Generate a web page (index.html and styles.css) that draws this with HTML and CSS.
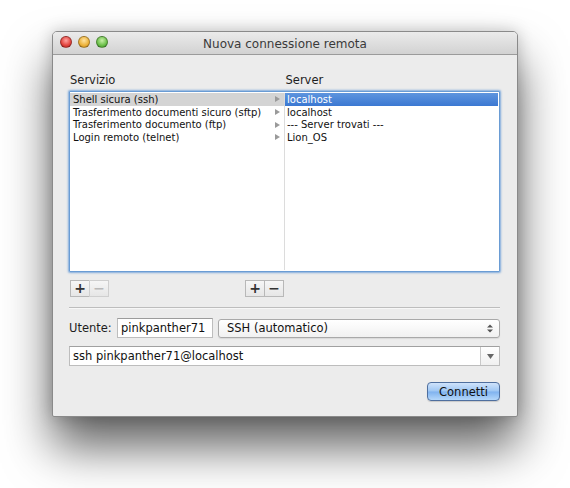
FILE: index.html
```html
<!DOCTYPE html>
<html>
<head>
	<title>Nuova connessione remota</title>
	<link rel="stylesheet" href="styles.css">
</head>
<body>

	<div class="window">
		<div class="titlebar">
			<div class="lights">
				<span class="light red"></span>
				<span class="light yellow"></span>
				<span class="light green"></span>
			</div>
			<div class="title">Nuova connessione remota</div>
		</div>

		<div class="content">
			<div class="heads">
				<div class="head">Servizio</div>
				<div class="head">Server</div>
			</div>

			<div class="browser">
				<div class="col left">
					<div class="row sel-gray"><span>Shell sicura (ssh)</span><i class="arr"></i></div>
					<div class="row"><span>Trasferimento documenti sicuro (sftp)</span><i class="arr"></i></div>
					<div class="row"><span>Trasferimento documento (ftp)</span><i class="arr"></i></div>
					<div class="row"><span>Login remoto (telnet)</span><i class="arr"></i></div>
				</div>
				<div class="col right">
					<div class="row sel-blue"><span>localhost</span></div>
					<div class="row"><span>localhost</span></div>
					<div class="row"><span>--- Server trovati ---</span></div>
					<div class="row"><span>Lion_OS</span></div>
				</div>
			</div>

			<div class="tools">
				<div class="seg">
					<button class="btn">+</button>
					<button class="btn off">&minus;</button>
				</div>
				<div class="seg">
					<button class="btn">+</button>
					<button class="btn">&minus;</button>
				</div>
			</div>

			<div class="sep"></div>

			<div class="user">
				<label>Utente:</label>
				<div class="field">pinkpanther71</div>
				<div class="popup">
					<span>SSH (automatico)</span>
					<span class="updown">
						<svg width="6" height="9" viewBox="0 0 6 9"><path d="M0 3.5 L3 0.5 L6 3.5 Z M0 5.5 L3 8.5 L6 5.5 Z" fill="#555"/></svg>
					</span>
				</div>
			</div>

			<div class="combo">
				<div class="combo-text">ssh pinkpanther71@localhost</div>
				<div class="combo-btn">
					<svg width="7" height="5" viewBox="0 0 7 5"><path d="M0 0 L7 0 L3.5 5 Z" fill="#666"/></svg>
				</div>
			</div>

			<div class="actions">
				<button class="connect">Connetti</button>
			</div>
		</div>
	</div>

</body>
</html>
```

FILE: styles.css
```css
*{
	box-sizing: border-box;
	font-family: 'DejaVu Sans', 'Liberation Sans', sans-serif;
}
html{
	background: #ffffff;
}
body{
	margin: 0px;
	background: #ffffff;
	padding: 31px 52px 71px 52px;
	min-height: 488px;
}

.window{
	width: 466px;
	height: 386px;
	background: #ececec;
	border: 1px solid #8a8a8a;
	border-radius: 5px 5px 2px 2px;
	box-shadow: 0px 30px 48px rgba(0,0,0,0.62), 0px 0px 16px rgba(0,0,0,0.2);
	display: flex;
	flex-direction: column;
	overflow: hidden;
}

.titlebar{
	height: 23px;
	display: flex;
	align-items: center;
	position: relative;
	background: linear-gradient(#ebebeb, #d2d2d2);
	border-bottom: 1px solid #9b9b9b;
	flex-shrink: 0;
}

.lights{
	display: flex;
	gap: 6px;
	padding-left: 7px;
	position: absolute;
	left: 0px;
	top: 4px;
}

.light{
	width: 12px;
	height: 12px;
	border-radius: 50%;
	display: block;
	border: 1px solid rgba(0,0,0,0.3);
}
.red{ background: radial-gradient(circle at 50% 35%, #ffa2a0, #e2443e 60%, #b0231f); }
.yellow{ background: radial-gradient(circle at 50% 35%, #ffe3a0, #ecb23a 60%, #c0821b); }
.green{ background: radial-gradient(circle at 50% 35%, #c8f0a8, #6cc04a 60%, #3c8f28); }

.title{
	width: 100%;
	text-align: center;
	font-size: 12px;
	color: #3a3a3a;
	padding-top: 1px;
}

.content{
	padding: 14px 17px 0px 16px;
	display: flex;
	flex-direction: column;
}

.heads{
	display: flex;
	height: 22px;
	align-items: center;
}
.head{
	width: 216px;
	font-size: 11.5px;
	color: #1e1e1e;
	padding-left: 1px;
}

.browser{
	display: flex;
	height: 181px;
	background: #ffffff;
	border: 1px solid #6a9cd4;
	box-shadow: 0px 0px 2px 1px rgba(94,150,214,0.75);
	border-radius: 1px;
	padding: 1px 0px;
}

.col{
	display: flex;
	flex-direction: column;
}
.col.left{
	width: 215px;
	border-right: 1px solid #dcdcdc;
}
.col.right{
	flex: 1;
	padding-right: 1px;
}

.row{
	height: 12.7px;
	display: flex;
	align-items: center;
	justify-content: space-between;
	font-size: 10px;
	color: #111;
	padding: 0px 4px 0px 3px;
	white-space: nowrap;
}
.col.right .row{
	padding-left: 2px;
}

.arr{
	width: 0px;
	height: 0px;
	border-top: 3.5px solid transparent;
	border-bottom: 3.5px solid transparent;
	border-left: 5px solid #9a9a9a;
}

.sel-gray{
	background: #d4d4d4;
}
.sel-blue{
	background: linear-gradient(#5e95de, #3b78d2);
	color: #ffffff;
}

.tools{
	display: flex;
	justify-content: space-between;
	width: 214px;
	margin-top: 8px;
	padding-left: 1px;
}
.seg{
	display: flex;
}
.btn{
	width: 20px;
	height: 17px;
	padding: 0px;
	border: 1px solid #b8b8b8;
	background: linear-gradient(#f6f6f6, #e6e6e6);
	font-size: 14px;
	font-weight: bold;
	line-height: 13px;
	color: #333;
	margin-right: -1px;
}
.btn.off{
	color: #b9b9b9;
	border-color: #cfcfcf;
}

.sep{
	height: 1px;
	background: #bdbdbd;
	border-bottom: 1px solid #f7f7f7;
	margin-top: 10px;
	box-sizing: content-box;
}

.user{
	display: flex;
	align-items: center;
	margin-top: 9px;
	height: 20px;
}
.user label{
	font-size: 11.5px;
	color: #1e1e1e;
	width: 48px;
}
.field{
	width: 96px;
	height: 20px;
	background: #fff;
	border: 1px solid #bdbdbd;
	border-top-color: #9c9c9c;
	font-size: 11.5px;
	padding: 2px 3px;
	color: #111;
}
.popup{
	flex: 1;
	margin-left: 5px;
	height: 19px;
	background: linear-gradient(#ffffff, #f1f1f1);
	border: 1px solid #a9a9a9;
	border-radius: 3px;
	display: flex;
	align-items: center;
	justify-content: space-between;
	padding: 0px 6px 0px 8px;
	font-size: 11.5px;
	color: #111;
	box-shadow: 0px 1px 1px rgba(0,0,0,0.08);
}
.updown{
	display: flex;
}

.combo{
	display: flex;
	margin-top: 8px;
	height: 20px;
	background: #fff;
	border: 1px solid #bdbdbd;
	border-top-color: #a0a0a0;
}
.combo-text{
	flex: 1;
	font-size: 11.5px;
	padding: 2px 3px;
	color: #111;
}
.combo-btn{
	width: 19px;
	border-left: 1px solid #c9c9c9;
	display: flex;
	align-items: center;
	justify-content: center;
	background: linear-gradient(#ffffff, #f0f0f0);
}

.actions{
	display: flex;
	justify-content: flex-end;
	margin-top: 16px;
}
.connect{
	width: 73px;
	height: 19px;
	padding: 0px;
	border: 1px solid #4f6f9e;
	border-radius: 4px;
	background: linear-gradient(#cfe3fb 0%, #9ec6f3 48%, #7fb2ef 52%, #b4d7fb 100%);
	font-size: 11.5px;
	color: #111;
	box-shadow: 0px 1px 1px rgba(0,0,0,0.15);
}
```
